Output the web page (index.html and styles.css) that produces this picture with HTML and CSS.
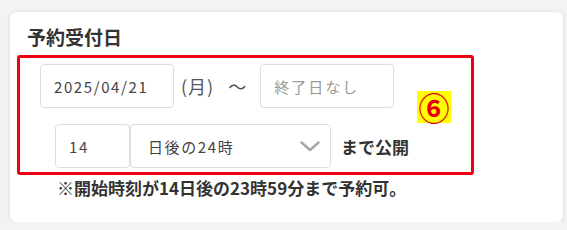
FILE: index.html
```html
<!DOCTYPE html>
<html>
<head>
    <meta charset="utf-8">
    <title>予約受付日</title>
    <link rel="stylesheet" href="styles.css">
</head>
<body>
    <div class="card">
        <h2 class="title">予約受付日</h2>
        <div class="mark">
            <div class="row">
                <input type="text" class="field date" value="2025/04/21">
                <span class="week">(月)</span>
                <span class="tilde">〜</span>
                <input type="text" class="field date" placeholder="終了日なし">
            </div>
            <div class="row row2">
                <input type="text" class="field num" value="14">
                <div class="field pick">
                    <span>日後の24時</span>
                    <svg width="22" height="14" viewBox="0 0 22 14"><path d="M2.5 3.5 L11 11 L19.5 3.5" fill="none" stroke="#a5a5a5" stroke-width="2.4" stroke-linecap="round" stroke-linejoin="round"/></svg>
                </div>
                <span class="until">まで公開</span>
            </div>
            <span class="badge">⑥</span>
        </div>
        <p class="note">※開始時刻が14日後の23時59分まで予約可。</p>
    </div>
</body>
</html>
```

FILE: styles.css
```css
html,body{
    margin: 0;
    padding: 0;
}
body{
    background-color: #f3f3f3;
    font-family: "Noto Sans CJK JP", "Noto Sans", sans-serif;
    color: #333;
}
.card{
    width: 553px;
    height: 210px;
    margin: 12px 0 0 10px;
    padding: 11px 0 0 7px;
    box-sizing: border-box;
    background-color: #fff;
    border-radius: 6px;
    box-shadow: 0 1px 4px rgba(0,0,0,.12);
}
.title{
    margin: 0 0 4px 10px;
    font-size: 19px;
    line-height: 28px;
    font-weight: bold;
    color: #333;
}
/* 赤枠 */
.mark{
    position: relative;
    width: 457px;
    box-sizing: border-box;
    border: 3px solid #ee0010;
    border-radius: 3px;
    padding: 6px 0 4px 20px;
}
.row{
    display: flex;
    align-items: center;
    height: 44px;
}
.row2{
    margin-top: 16px;
    padding-left: 15px;
}
.field{
    height: 44px;
    box-sizing: border-box;
    border: 1px solid #ddd;
    border-radius: 4px;
    padding: 0 13px;
    font-family: "Noto Sans CJK JP", sans-serif;
    font-size: 15px;
    letter-spacing: 1.6px;
    color: #444;
    background-color: #fff;
    outline: none;
}
.field::placeholder{
    color: #999;
    letter-spacing: 2px;
}
.date{
    width: 134px;
}
.week{
    margin-left: 7px;
    font-size: 18px;
    letter-spacing: 1px;
    color: #555;
}
.tilde{
    margin: 0 14px 0 14px;
    font-size: 18px;
    color: #555;
}
.num{
    width: 75px;
}
.pick{
    width: 201px;
    display: flex;
    align-items: center;
    justify-content: space-between;
    padding: 0 9px 0 17px;
}
.until{
    margin-left: 10px;
    font-size: 17px;
    font-weight: bold;
    color: #333;
}
.badge{
    position: absolute;
    left: 397px;
    top: 33px;
    width: 34px;
    height: 32px;
    background-color: #ffff00;
    color: #e60012;
    font-size: 31px;
    font-weight: bold;
    line-height: 32px;
    text-align: center;
}
.note{
    margin: 1px 0 0 40px;
    font-size: 17px;
    line-height: 24px;
    font-weight: bold;
    color: #333;
}
```
